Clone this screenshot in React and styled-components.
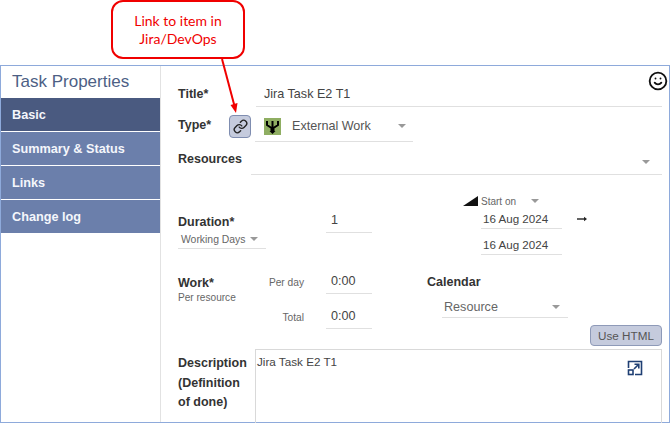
import styled, { createGlobalStyle } from 'styled-components';
import { Link, Smile } from 'lucide-react';

const menu = ['Basic', 'Summary & Status', 'Links', 'Change log'];

const App = () => (
  <>
    <Global />
    <Page>
      <Callout>
        Link to item in
        <br />
        Jira/DevOps
      </Callout>
      <Pointer width="40" height="62" viewBox="0 0 40 62">
        <line x1="2" y1="0" x2="14.5" y2="47" stroke="#f00000" strokeWidth="2" />
        <polygon points="16,54 10.5,46 17.5,44" fill="#f00000" />
      </Pointer>
      <Frame>
        <Side>
          <Heading>Task Properties</Heading>
          {menu.map((item, i) => (
            <MenuItem key={item} $active={i === 0}>
              {item}
            </MenuItem>
          ))}
        </Side>
        <Form>
          <FaceIcon size={20} strokeWidth={2.2} />
          <TitleRow>
            <Label>Title*</Label>
            <Field $w="406px">Jira Task E2 T1</Field>
          </TitleRow>
          <TypeRow>
            <Label>Type*</Label>
            <LinkButton>
              <Link size={15} strokeWidth={2.2} />
            </LinkButton>
            <TypeSelect>
              <TypeIcon viewBox="0 0 17 17" width="17" height="17">
                <rect width="17" height="17" fill="#8fae62" />
                <path
                  d="M3 3v4l4.5 3v3M14 3v4l-4.5 3v3M8.5 3v11"
                  fill="none"
                  stroke="#000"
                  strokeWidth="2"
                />
                <path d="M5.5 13h6l-3 3z" fill="#000" />
              </TypeIcon>
              External Work
              <Caret />
            </TypeSelect>
          </TypeRow>
          <ResourcesRow>
            <Label>Resources</Label>
            <ResourcesField>
              <Caret />
            </ResourcesField>
          </ResourcesRow>
          <DurationBlock>
            <DurationLeft>
              <Label>Duration*</Label>
              <SmallSelect>
                Working Days
                <Caret $left="5px" />
              </SmallSelect>
            </DurationLeft>
            <DurationNum $w="46px">1</DurationNum>
            <Dates>
              <StartOn>
                <Wedge />
                Start on
                <Caret $left="15px" />
              </StartOn>
              <DateRow>
                <DateField>16 Aug 2024</DateField>
                <Arrow viewBox="0 0 10 6" width="10" height="6">
                  <path d="M0 3h8" stroke="#222" strokeWidth="1.4" />
                  <path d="M7 .8 10 3 7 5.2z" fill="#222" />
                </Arrow>
              </DateRow>
              <EndDate>16 Aug 2024</EndDate>
            </Dates>
          </DurationBlock>
          <WorkBlock>
            <WorkLeft>
              <Label>Work*</Label>
              <Hint>Per resource</Hint>
            </WorkLeft>
            <WorkGrid>
              <WorkLabel>Per day</WorkLabel>
              <Num $w="46px">0:00</Num>
              <WorkLabel>Total</WorkLabel>
              <Num $w="46px">0:00</Num>
            </WorkGrid>
            <CalendarCol>
              <Label>Calendar</Label>
              <CalendarSelect>
                Resource
                <Caret />
              </CalendarSelect>
            </CalendarCol>
          </WorkBlock>
          <ButtonRow>
            <HtmlButton>Use HTML</HtmlButton>
          </ButtonRow>
          <DescRow>
            <DescLabel>
              Description
              <br />
              (Definition
              <br />
              of done)
            </DescLabel>
            <TextBox>
              Jira Task E2 T1
              <ExpandIcon viewBox="0 0 16 16" width="16" height="16">
                <path d="M1.5 8V1.5h13v13H8" fill="none" stroke="#1f3f73" strokeWidth="1.6" />
                <rect x="1.5" y="10" width="4.5" height="4.5" fill="none" stroke="#1f3f73" strokeWidth="1.6" />
                <path d="M7 9l4.5-4.5M7.5 4.2h4.3v4.3" fill="none" stroke="#1f3f73" strokeWidth="1.6" />
              </ExpandIcon>
            </TextBox>
          </DescRow>
        </Form>
      </Frame>
    </Page>
  </>
);

export default App;

const Global = createGlobalStyle`
  html, body {
    margin: 0;
    background: #fff;
    overflow: hidden;
  }
  body {
    font-family: "Liberation Sans", Arial, sans-serif;
    color: #444;
  }
`;

const Page = styled.div`
  position: relative;
  width: 670px;
  height: 423px;
  padding-top: 65px;
  box-sizing: border-box;
  overflow: hidden;
`;

const Callout = styled.div`
  position: absolute;
  left: 111px;
  top: 0;
  width: 134px;
  height: 59px;
  box-sizing: border-box;
  border: 2px solid #f00000;
  border-radius: 12px;
  background: #fff;
  color: #f00000;
  font-family: Lato, "Open Sans", sans-serif;
  font-size: 14px;
  line-height: 18px;
  text-align: center;
  padding-top: 10px;
`;

const Pointer = styled.svg`
  position: absolute;
  left: 220px;
  top: 59px;
  z-index: 2;
`;

const Frame = styled.div`
  display: flex;
  width: 670px;
  height: 358px;
  box-sizing: border-box;
  border: 1px solid #8eaadb;
`;

const Side = styled.div`
  width: 160px;
  box-sizing: border-box;
  flex-shrink: 0;
  border-right: 1px solid #e2e2e2;
`;

const Heading = styled.div`
  height: 32px;
  padding-left: 11px;
  font-size: 17px;
  line-height: 32px;
  color: #4d5f85;
`;

const MenuItem = styled.div`
  height: 33px;
  margin-bottom: 1px;
  padding-left: 11px;
  font-size: 12.7px;
  font-weight: bold;
  line-height: 34px;
  color: #f4f6fb;
  background: ${(p) => (p.$active ? '#4a5a80' : '#6b7fab')};
`;

const Form = styled.div`
  position: relative;
  flex: 1;
  padding-left: 17px;
  padding-right: 8px;
  font-size: 12.6px;
`;

const FaceIcon = styled(Smile)`
  position: absolute;
  right: 2px;
  top: 5px;
  color: #111;
`;

const Label = styled.div`
  font-size: 12.5px;
  font-weight: bold;
  color: #333;
`;

const Underlined = styled.div`
  box-sizing: border-box;
  border-bottom: 1px solid #e0e0e0;
`;

const Field = styled(Underlined)`
  width: ${(p) => p.$w};
  height: 25px;
  padding-left: 8px;
  line-height: 24px;
  color: #444;
`;

const TitleRow = styled.div`
  display: flex;
  align-items: flex-end;
  justify-content: space-between;
  padding-top: 16px;

  ${Label} {
    padding-bottom: 6px;
  }
`;

const TypeRow = styled.div`
  display: flex;
  align-items: flex-start;
  margin-top: 8px;
  height: 27px;

  ${Label} {
    width: 51px;
    margin-top: 3px;
  }
`;

const LinkButton = styled.div`
  width: 22px;
  height: 23px;
  box-sizing: border-box;
  display: flex;
  align-items: center;
  justify-content: center;
  background: #c5cbdd;
  border: 1px solid #7f8db0;
  border-radius: 4px;
  color: #222;
`;

const TypeSelect = styled(Underlined)`
  display: flex;
  align-items: center;
  width: 158px;
  height: 27px;
  margin-left: 4px;
  padding: 0 7px 4px 9px;
  white-space: nowrap;
  color: #555;
`;

const TypeIcon = styled.svg`
  flex-shrink: 0;
  margin-right: 11px;
`;

const Caret = styled.span`
  display: inline-block;
  flex-shrink: 0;
  margin-left: ${(p) => p.$left || 'auto'};
  width: 0;
  height: 0;
  border-left: 4px solid transparent;
  border-right: 4px solid transparent;
  border-top: 4px solid #999;
`;

const ResourcesRow = styled.div`
  display: flex;
  align-items: flex-start;
  justify-content: space-between;
  margin-top: 7px;

  ${Label} {
    margin-top: 3px;
  }
`;

const ResourcesField = styled(Underlined)`
  display: flex;
  align-items: center;
  width: 411px;
  height: 26px;
  padding: 1px 12px 0 0;
`;

const DurationBlock = styled.div`
  display: flex;
  align-items: flex-start;
  margin-top: 14px;
`;

const DurationLeft = styled.div`
  width: 148px;
  padding-top: 26px;
`;

const SmallSelect = styled(Underlined)`
  display: flex;
  align-items: center;
  width: 88px;
  height: 19px;
  padding-left: 3px;
  margin-top: 1px;
  font-size: 10.4px;
  color: #666;
`;

const Num = styled(Underlined)`
  width: ${(p) => p.$w};
  height: 24px;
  padding-left: 5px;
  line-height: 23px;
  color: #444;
`;

const DurationNum = styled(Num)`
  margin-top: 20px;
`;

const Dates = styled.div`
  margin-left: 109px;
  padding-top: 4px;
`;

const StartOn = styled.div`
  display: flex;
  align-items: center;
  height: 16px;
  margin-left: -18px;
  font-size: 10px;
  color: #666;
`;

const Wedge = styled.span`
  width: 0;
  height: 0;
  margin-right: 3px;
  border-bottom: 10px solid #111;
  border-left: 15px solid transparent;
`;

const DateRow = styled.div`
  display: flex;
  align-items: center;
  gap: 15px;
`;

const DateField = styled(Underlined)`
  width: 81px;
  height: 20px;
  padding: 3px 0 0 2px;
  font-size: 11.6px;
  line-height: 14px;
  color: #444;
`;

const EndDate = styled(DateField)`
  margin-top: 6px;
`;

const Arrow = styled.svg`
  flex-shrink: 0;
`;

const WorkBlock = styled.div`
  display: flex;
  align-items: flex-start;
  margin-top: 15px;
`;

const WorkLeft = styled.div`
  width: 84px;
  padding-top: 6px;
`;

const Hint = styled.div`
  margin-top: 1px;
  font-size: 10.1px;
  line-height: 14px;
  color: #666;
`;

const WorkGrid = styled.div`
  display: grid;
  grid-template-columns: 42px 46px;
  column-gap: 22px;
  row-gap: 11px;
  align-items: center;
`;

const WorkLabel = styled.div`
  font-size: 10.2px;
  color: #666;
  text-align: right;
`;

const CalendarCol = styled.div`
  margin-left: 55px;
  padding-top: 5px;
`;

const CalendarSelect = styled(Underlined)`
  display: flex;
  align-items: center;
  width: 126px;
  height: 22px;
  margin: 7px 0 0 15px;
  padding: 1px 8px 0 2px;
  color: #666;
`;

const ButtonRow = styled.div`
  display: flex;
  justify-content: flex-end;
  margin-top: -4px;
`;

const HtmlButton = styled.div`
  width: 72px;
  height: 21px;
  box-sizing: border-box;
  border: 1px solid #8e9ab8;
  border-radius: 4px;
  background: #c5cbdd;
  color: #555;
  font-size: 11.7px;
  line-height: 19px;
  text-align: center;
`;

const DescRow = styled.div`
  display: flex;
  align-items: flex-start;
  margin-top: 3px;
`;

const DescLabel = styled(Label)`
  width: 77px;
  flex-shrink: 0;
  padding-top: 5px;
  line-height: 19.5px;
`;

const TextBox = styled.div`
  position: relative;
  width: 407px;
  height: 90px;
  box-sizing: border-box;
  padding: 4px 1px;
  border: 1px solid #d9d9d9;
  font-size: 11.7px;
  line-height: 16px;
  color: #444;
`;

const ExpandIcon = styled.svg`
  position: absolute;
  left: 371px;
  top: 10px;
`;
